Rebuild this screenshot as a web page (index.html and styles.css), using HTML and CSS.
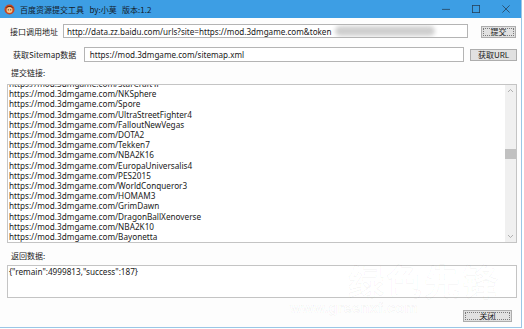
FILE: index.html
```html
<!DOCTYPE html>
<html lang="zh-CN">
<head>
  <meta charset="UTF-8">
  <meta name="viewport" content="width=device-width, initial-scale=1.0">
  <title>百度资源提交工具</title>
  <link rel="stylesheet" href="styles.css">
</head>
<body>
  <div class="window">
    <div class="titlebar">
      <svg class="app-icon" width="11" height="11" viewBox="0 0 11 11">
        <circle cx="5.5" cy="5.5" r="5" fill="#c8461e"/>
        <circle cx="5.5" cy="6" r="3" fill="#f3c48a"/>
        <path d="M1.5 4 Q5.5 0 9.5 4 L8 3.5 Q5.5 2 3 3.5 Z" fill="#3a2210"/>
        <circle cx="4.3" cy="5.8" r="0.6" fill="#3a2210"/>
        <circle cx="6.7" cy="5.8" r="0.6" fill="#3a2210"/>
      </svg>
      <span class="title">百度资源提交工具&nbsp;&nbsp;&nbsp;by:小莫&nbsp;&nbsp;&nbsp;版本:1.2</span>
      <div class="controls">
        <span class="ctl">
          <svg width="10" height="10" viewBox="0 0 10 10"><path d="M0 5.5 H10" stroke="#27435c" stroke-width="1"/></svg>
        </span>
        <span class="ctl">
          <svg width="10" height="10" viewBox="0 0 10 10"><rect x="0.5" y="0.5" width="9" height="9" fill="none" stroke="#27435c" stroke-width="1"/></svg>
        </span>
        <span class="ctl">
          <svg width="10" height="10" viewBox="0 0 10 10"><path d="M0.5 0.5 L9.5 9.5 M9.5 0.5 L0.5 9.5" stroke="#27435c" stroke-width="1"/></svg>
        </span>
      </div>
    </div>

    <div class="content">
      <div class="row row-api">
        <label class="label label-api">接口调用地址</label>
        <div class="input input-api">
          <span class="value">http://data.zz.baidu.com/urls?site=https://mod.3dmgame.com&amp;token</span>
          <span class="blur"></span>
        </div>
        <button class="btn btn-submit">提交</button>
      </div>

      <div class="row row-sitemap">
        <label class="label label-sitemap">获取Sitemap数据</label>
        <div class="input input-sitemap">
          <span class="value">https://mod.3dmgame.com/sitemap.xml</span>
        </div>
        <button class="btn btn-fetch">获取URL</button>
      </div>

      <div class="caption">提交链接:</div>

      <div class="listbox">
        <div class="lines">
          <div>https://mod.3dmgame.com/StarCraftⅡ</div>
          <div>https://mod.3dmgame.com/NKSphere</div>
          <div>https://mod.3dmgame.com/Spore</div>
          <div>https://mod.3dmgame.com/UltraStreetFighter4</div>
          <div>https://mod.3dmgame.com/FalloutNewVegas</div>
          <div>https://mod.3dmgame.com/DOTA2</div>
          <div>https://mod.3dmgame.com/Tekken7</div>
          <div>https://mod.3dmgame.com/NBA2K16</div>
          <div>https://mod.3dmgame.com/EuropaUniversalis4</div>
          <div>https://mod.3dmgame.com/PES2015</div>
          <div>https://mod.3dmgame.com/WorldConqueror3</div>
          <div>https://mod.3dmgame.com/HOMAM3</div>
          <div>https://mod.3dmgame.com/GrimDawn</div>
          <div>https://mod.3dmgame.com/DragonBallXenoverse</div>
          <div>https://mod.3dmgame.com/NBA2K10</div>
          <div>https://mod.3dmgame.com/Bayonetta</div>
        </div>
        <div class="scrollbar">
          <svg class="arrow" width="7" height="5" viewBox="0 0 7 5"><path d="M1 4 L3.5 1.5 L6 4" fill="none" stroke="#a0a0a0" stroke-width="0.8"/></svg>
          <div class="track">
            <div class="thumb"></div>
          </div>
          <svg class="arrow" width="7" height="5" viewBox="0 0 7 5"><path d="M1 1 L3.5 3.5 L6 1" fill="none" stroke="#a0a0a0" stroke-width="0.8"/></svg>
        </div>
      </div>

      <div class="caption caption-result">返回数据:</div>

      <div class="result">{"remain":4999813,"success":187}</div>

      <div class="footer">
        <button class="btn btn-close">关闭</button>
      </div>

      <div class="watermark">
        <div class="wm-big">绿色先锋</div>
        <div class="wm-small">www.greenxf.com</div>
      </div>
    </div>
  </div>
</body>
</html>
```

FILE: styles.css
```css
body {
  margin: 0;
  width: 524px;
  height: 329px;
  overflow: hidden;
  background: #ffffff;
  font-family: "Noto Sans", "Noto Sans CJK SC", sans-serif;
  color: #1a1a1a;
}

.window {
  width: 521px;
  height: 327px;
  border-right: 1px solid #9ac6e6;
  border-bottom: 1px solid #9ac6e6;
  display: flex;
  flex-direction: column;
  background: #fdfdfd;
}

.titlebar {
  height: 18px;
  background: #3d9ee4;
  display: flex;
  align-items: center;
  flex-shrink: 0;
}

.app-icon {
  margin-left: 4px;
}

.title {
  margin-left: 5px;
  font-family: "Noto Sans CJK SC", sans-serif;
  font-size: 8px;
  color: #14202c;
}

.controls {
  margin-left: auto;
  display: flex;
}

.ctl {
  width: 30px;
  height: 18px;
  display: flex;
  align-items: center;
  justify-content: center;
}

.ctl svg {
  width: 8px;
  height: 8px;
}

.content {
  position: relative;
  flex: 1;
  padding: 0 4px 0 7px;
  display: flex;
  flex-direction: column;
}

.row {
  display: flex;
  align-items: flex-start;
}

.row-api {
  margin-top: 6px;
  height: 14px;
}

.row-sitemap {
  margin-top: 9px;
  height: 15px;
}

.label {
  font-family: "Noto Sans CJK SC", sans-serif;
  font-size: 8px;
  line-height: 14px;
  white-space: nowrap;
}

.label-api {
  width: 53px;
  padding-left: 3px;
  line-height: 16px;
}

.label-sitemap {
  width: 71px;
  padding-left: 6px;
  line-height: 15px;
}

.input {
  box-sizing: border-box;
  border: 1px solid #b4b4b4;
  background: #ffffff;
  display: flex;
  align-items: center;
  overflow: hidden;
  white-space: nowrap;
  font-size: 8.1px;
  padding-left: 3px;
}

.input-api {
  width: 405px;
  height: 14px;
}

.input-sitemap {
  width: 382px;
  height: 15px;
  padding-left: 5px;
}

.blur {
  display: inline-block;
  width: 100px;
  height: 10px;
  margin-left: 4px;
  background: #cfcfcf;
  border-radius: 5px;
  filter: blur(2px);
}

.btn {
  box-sizing: border-box;
  border: 1px solid #adadad;
  background: #e1e1e1;
  font-family: "Noto Sans CJK SC", "Noto Sans", sans-serif;
  font-size: 8px;
  color: #1a1a1a;
  padding: 0;
  line-height: 10px;
  outline: 1px dotted #7a7a7a;
  outline-offset: -3px;
}

.btn-submit {
  width: 35px;
  height: 12px;
  margin-left: 13px;
  margin-top: 2px;
}

.btn-fetch {
  width: 47px;
  height: 12px;
  margin-left: 6px;
  margin-top: 2px;
  outline: none;
}

.caption {
  font-family: "Noto Sans CJK SC", sans-serif;
  font-size: 8px;
  height: 22px;
  line-height: 21px;
  padding-left: 4px;
}

.caption-result {
  line-height: 25px;
}

.listbox {
  box-sizing: border-box;
  width: 510px;
  height: 159px;
  border: 1px solid #c4c4c4;
  background: #ffffff;
  display: flex;
  overflow: hidden;
}

.lines {
  flex: 1;
  margin-top: -6px;
  padding-left: 1px;
  font-size: 8.2px;
  line-height: 10.2px;
  white-space: nowrap;
}

.scrollbar {
  width: 11px;
  background: #f0f0f0;
  display: flex;
  flex-direction: column;
  align-items: center;
  padding: 3px 0;
}

.track {
  flex: 1;
  width: 100%;
  padding-top: 56px;
}

.thumb {
  height: 10px;
  background: #c1c1c1;
}

.result {
  box-sizing: border-box;
  width: 510px;
  height: 33px;
  border: 1px solid #c4c4c4;
  background: #ffffff;
  font-size: 8.2px;
  padding: 1px 0 0 1px;
  line-height: 10px;
}

.footer {
  display: flex;
  justify-content: flex-end;
  padding-right: 5px;
  margin-top: 12px;
}

.btn-close {
  width: 49px;
  height: 12px;
}

.watermark {
  position: absolute;
  left: 348px;
  top: 242px;
  pointer-events: none;
}

.wm-big {
  font-family: "Noto Sans CJK SC", sans-serif;
  font-size: 36px;
  font-weight: 700;
  line-height: 40px;
  letter-spacing: 2px;
  color: rgba(0, 0, 0, 0.025);
  -webkit-text-stroke: 0.6px rgba(0, 0, 0, 0.06);
}

.wm-small {
  font-family: "Liberation Sans", sans-serif;
  font-size: 15px;
  font-weight: 700;
  line-height: 16px;
  margin-left: -58px;
  color: rgba(0, 0, 0, 0.025);
  -webkit-text-stroke: 0.6px rgba(0, 0, 0, 0.06);
}
```
